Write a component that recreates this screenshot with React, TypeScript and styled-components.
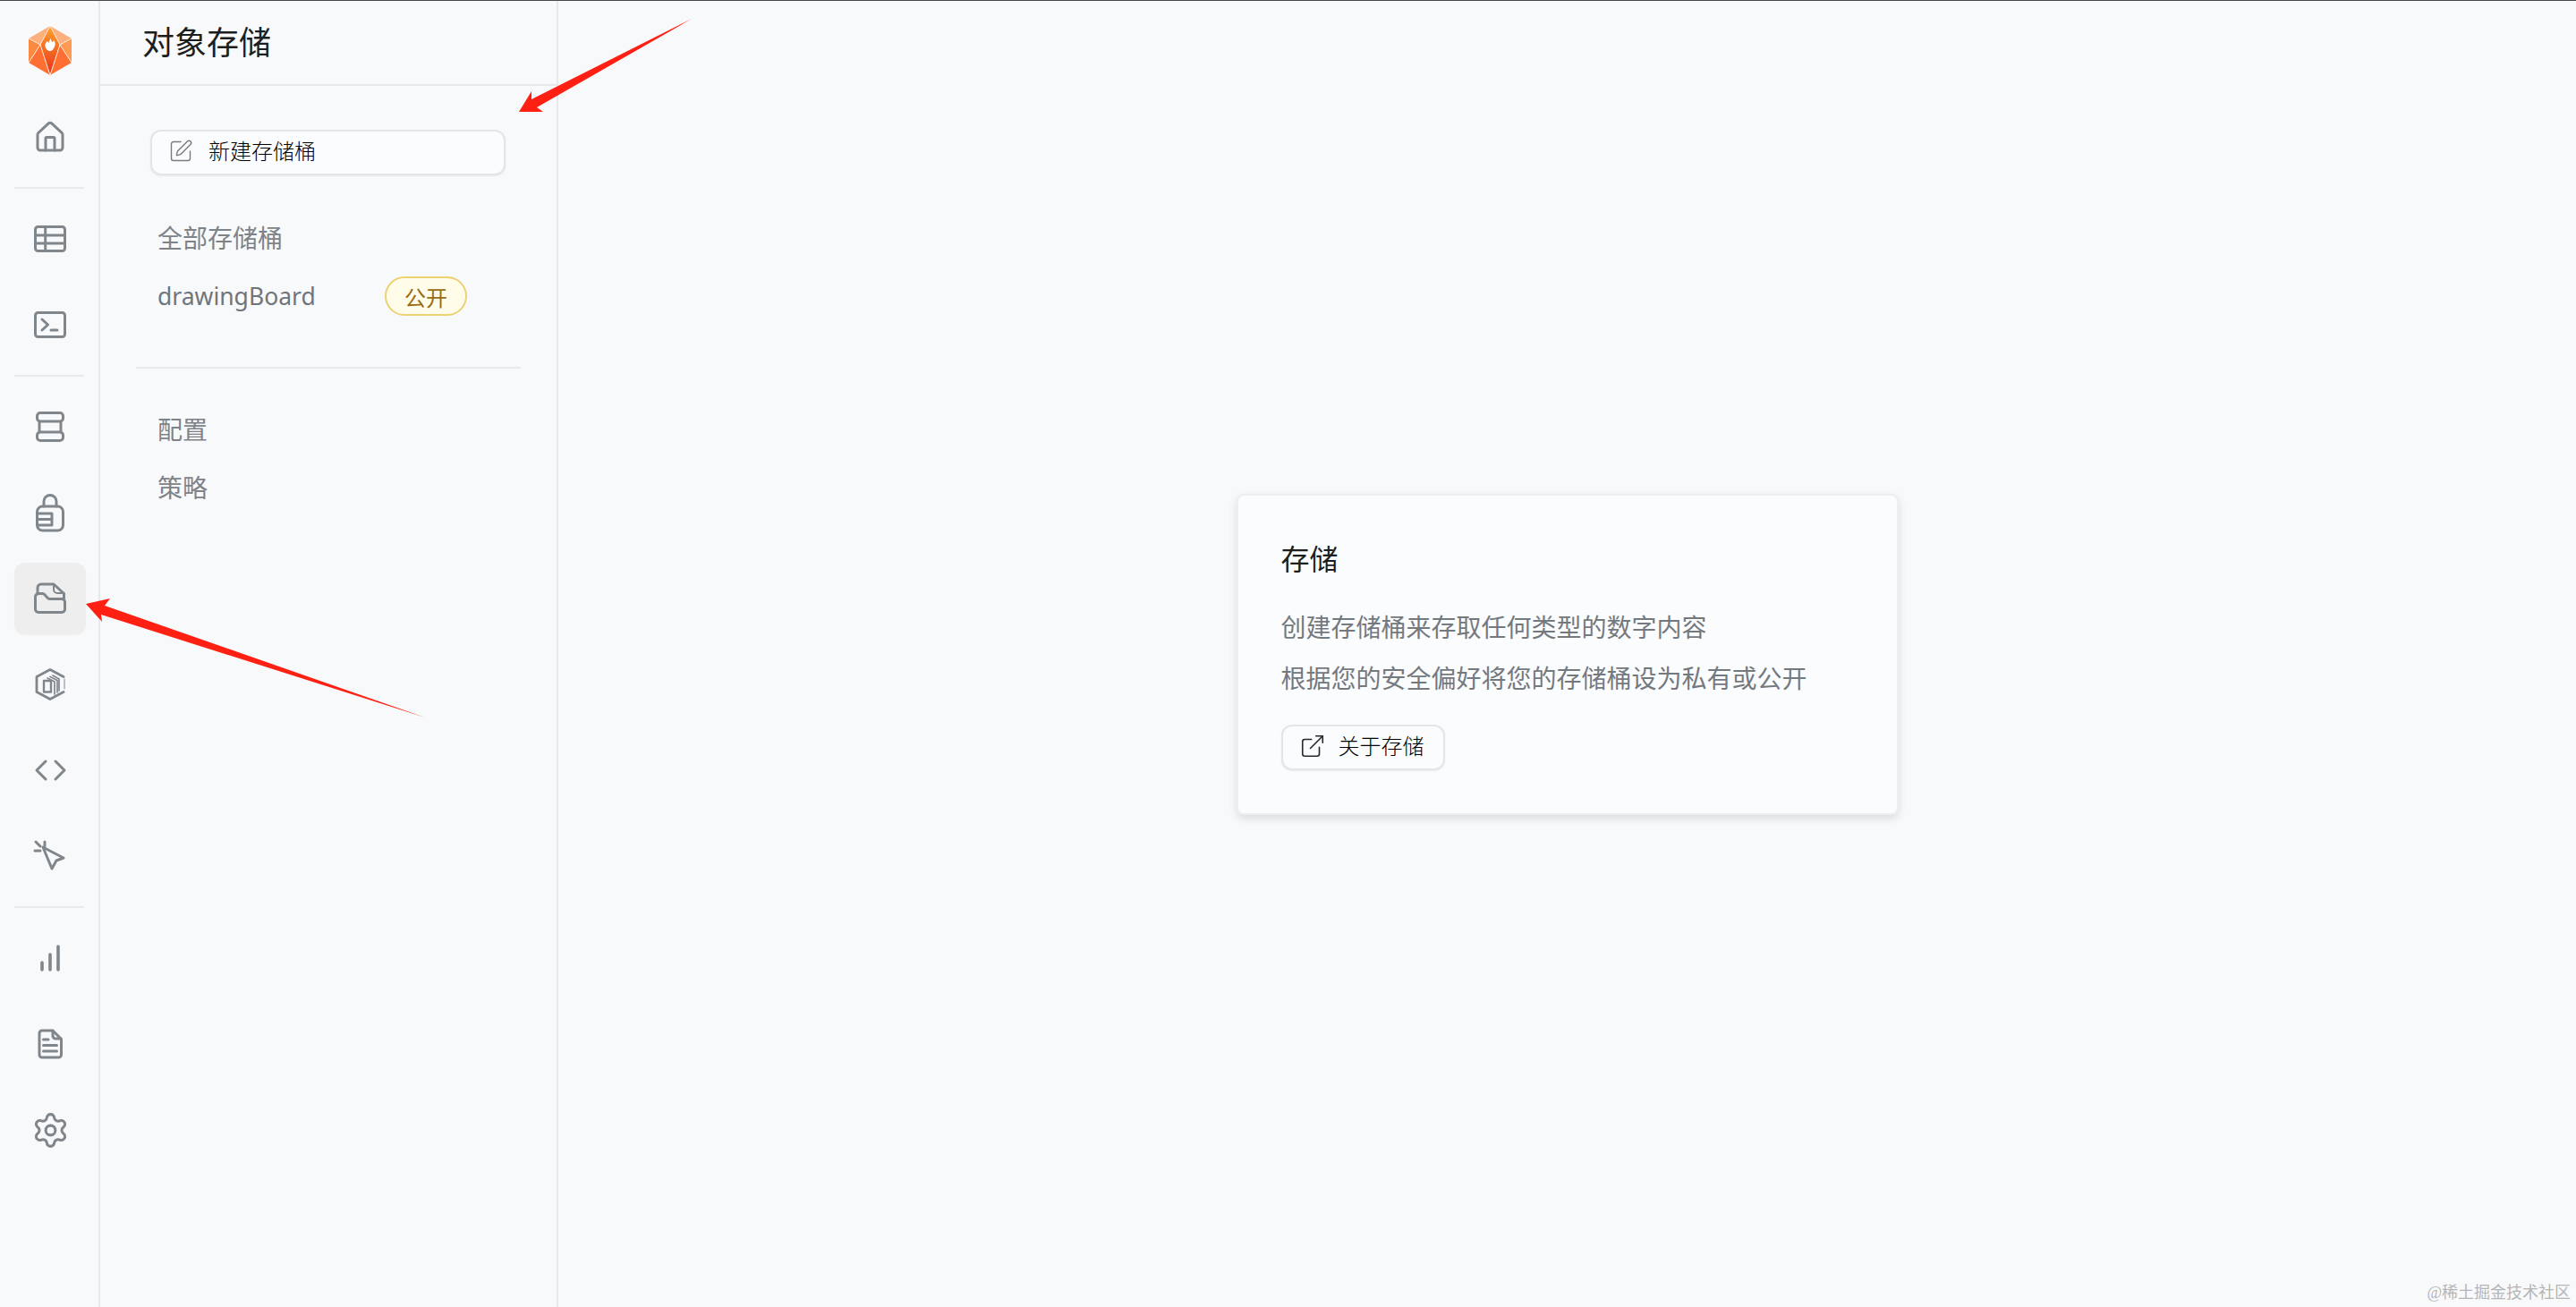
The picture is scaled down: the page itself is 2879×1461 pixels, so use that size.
import React from "react";
import styled, { createGlobalStyle } from "styled-components";
import { ExternalLink, Settings, SquarePen } from "lucide-react";

const GlobalStyle = createGlobalStyle`
  html, body {
    margin: 0;
    padding: 0;
    background: #f8f9fb;
    overflow: hidden;
  }

  * {
    box-sizing: border-box;
  }
`;

const Page = styled.div`
  position: relative;
  display: flex;
  width: 100%;
  height: 100vh;
  border-top: 1px solid #45484c;
  background: #f8f9fb;
  font-family: "Noto Sans", "Noto Sans CJK SC", sans-serif;
  font-weight: 400;
  overflow: hidden;
`;

const Rail = styled.nav`
  flex: 0 0 112px;
  display: flex;
  flex-direction: column;
  align-items: flex-start;
  gap: 16px;
  padding: 28px 0 0 16px;
  border-right: 2px solid #e6e8eb;
`;

const LogoWrap = styled.div`
  display: flex;
  justify-content: center;
  width: 80px;
  height: 68px;
`;

const RailItem = styled.a<{ $active?: boolean }>`
  display: flex;
  align-items: center;
  justify-content: center;
  width: 80px;
  height: 80px;
  border-radius: 12px;
  background: ${(p) => (p.$active ? "#eeeeee" : "transparent")};
  color: #80878c;
  box-shadow: ${(p) => (p.$active ? "0 1px 2px rgba(0, 0, 0, 0.04)" : "none")};

  svg {
    overflow: visible;
  }
`;

const RailDivider = styled.div`
  width: 78px;
  height: 2px;
  background: #e8e9eb;
`;

const Panel = styled.aside`
  flex: 0 0 512px;
  display: flex;
  flex-direction: column;
  border-right: 2px solid #e6e8eb;
`;

const PanelHeader = styled.header`
  display: flex;
  align-items: center;
  height: 95px;
  padding: 0 0 0 47px;
  border-bottom: 2px solid #e6e8eb;
`;

const PanelTitle = styled.h1`
  margin: 0;
  font-size: 36px;
  font-weight: 400;
  line-height: 1;
  color: #1c1e20;
`;

const PanelBody = styled.div`
  padding: 49px 40px 0;
`;

const GhostButton = styled.button<{ $wide?: boolean }>`
  display: flex;
  align-items: center;
  width: ${(p) => (p.$wide ? "397px" : "183px")};
  height: 51px;
  margin: ${(p) => (p.$wide ? "0 0 0 16px" : "0")};
  padding: 0 0 3px 18px;
  gap: ${(p) => (p.$wide ? "17px" : "14px")};
  border: 2px solid #e3e5e8;
  border-radius: 12px;
  background: #fbfcfe;
  box-shadow: 0 1px 2px rgba(0, 0, 0, 0.07);
  font-family: inherit;
  font-size: 24px;
  font-weight: 300;
  line-height: 1;
  color: #000000;
`;

const Group = styled.div`
  margin-top: 36px;
`;

const NavRow = styled.div`
  display: flex;
  align-items: center;
  justify-content: space-between;
  width: 370px;
  height: 66px;
  padding-left: 24px;
  font-size: 28px;
  color: #7e8388;
`;

const SettingRow = styled(NavRow)`
  height: 65px;
`;

const BucketName = styled.span`
  font-size: 26.5px;
  color: #6f757b;
`;

const Badge = styled.span`
  display: flex;
  align-items: center;
  justify-content: center;
  width: 92px;
  height: 44px;
  border: 2px solid #ecd272;
  border-radius: 22px;
  background: #fffcea;
  font-size: 24px;
  color: #9a6c10;
`;

const PanelDivider = styled.div`
  height: 2px;
  margin: 46px 0 34px;
  background: #e8e9eb;
`;

const Main = styled.main`
  flex: 1;
  display: flex;
  align-items: center;
  justify-content: center;
`;

const Card = styled.section`
  width: 740px;
  height: 359px;
  padding: 49px 48px;
  border: 2px solid #eceef0;
  border-radius: 8px;
  background: #fbfcfe;
  box-shadow: 0 4px 10px rgba(0, 0, 0, 0.12);
`;

const CardTitle = styled.h2`
  margin: 0 0 26px;
  font-size: 32px;
  font-weight: 400;
  line-height: 44px;
  color: #1c1e20;
`;

const CardText = styled.p`
  margin: 0;
  font-size: 28px;
  line-height: 57px;
  color: #74797e;
`;

const CardActions = styled.div`
  margin-top: 23px;
`;

const ArrowLayer = styled.svg`
  position: absolute;
  top: 0;
  left: 0;
  width: 800px;
  height: 820px;
  pointer-events: none;
`;

const Watermark = styled.div`
  position: absolute;
  right: 6px;
  bottom: 5px;
  font-family: "Liberation Serif", "Noto Sans CJK SC", serif;
  font-size: 18px;
  line-height: 22px;
  color: #b4b5b7;
`;

const Logo = () => (
  <svg width="48" height="55" viewBox="0 0 48 55">
    <defs>
      <linearGradient id="kite" x1="0" y1="0" x2="0" y2="1">
        <stop offset="0" stopColor="#ffa32e" />
        <stop offset="1" stopColor="#e62f1a" />
      </linearGradient>
    </defs>
    <polygon points="24,0 0,14 13,21" fill="#fdb07d" />
    <polygon points="24,0 48,14 35,21" fill="#fdb07d" />
    <polygon points="0,14 13,21 0,41" fill="#f98a3f" />
    <polygon points="48,14 35,21 48,41" fill="#fe9a51" />
    <polygon points="0,41 13,21 24,55" fill="#fe6f33" />
    <polygon points="48,41 35,21 24,55" fill="#fe6f33" />
    <polygon points="24,0 35,21 24,55 13,21" fill="url(#kite)" />
    <path
      d="M0 14L13 21L24 0L35 21L48 14M13 21L24 55L35 21M0 41L13 21M48 41L35 21"
      fill="none"
      stroke="#ffe9d8"
      strokeWidth="1"
    />
    <path
      d="M25 14c0 3 1 4 2 4l1-2c2 2 2 5 1 7-1 3-3 5-5 5s-5-2-5.500-5c-.5-3 1-5 2.500-6l1 2c1-1 1-3 3-5z"
      fill="#ffffff"
    />
  </svg>
);

const Glyph = ({ children }: { children: React.ReactNode }) => (
  <svg
    width="40"
    height="40"
    viewBox="0 0 40 40"
    fill="none"
    stroke="currentColor"
    strokeWidth="3"
    strokeLinecap="round"
    strokeLinejoin="round"
  >
    {children}
  </svg>
);

const railIcons: Record<string, React.ReactNode> = {
  home: (
    <Glyph>
      <path d="M6 32V17.5a3 3 0 0 1 1-2.2L18 5.2a3 3 0 0 1 4 0l11 10.1a3 3 0 0 1 1 2.2V32a3 3 0 0 1-3 3H9a3 3 0 0 1-3-3z" />
      <path d="M15 35V21.5a1 1 0 0 1 1-1h8a1 1 0 0 1 1 1V35" />
    </Glyph>
  ),
  table: (
    <Glyph>
      <rect x="3.5" y="6.5" width="33" height="27" rx="3" />
      <path d="M3.5 16h33M3.5 25h33M14.7 6.5v27" />
    </Glyph>
  ),
  terminal: (
    <Glyph>
      <rect x="3.5" y="6.5" width="33" height="27" rx="3" />
      <path d="M11 14l6.5 6L11 26M21 26h7" />
    </Glyph>
  ),
  database: (
    <Glyph>
      <rect x="5.5" y="4.5" width="29" height="9.5" rx="3.5" />
      <rect x="5.5" y="26" width="29" height="9.5" rx="3.5" />
      <path d="M8 14v12M32 14v12" />
    </Glyph>
  ),
  lock: (
    <Glyph>
      <rect x="5.5" y="13" width="29" height="27" rx="6" />
      <path d="M13 13V7.5a7 7 0 0 1 14 0V13" />
      <path d="M7 21h15v13H7M7 27.5h15" />
    </Glyph>
  ),
  folder: (
    <Glyph>
      <path d="M6 15V8a4 4 0 0 1 4-4h14l11.500 10.500V21" />
      <path d="M24 4v6a4 4 0 0 0 4 4h7.500" strokeWidth="2" />
      <path d="M3.500 32V18a3.500 3.500 0 0 1 3.500-3.500h4.500a3 3 0 0 1 2.200 1l3.600 4a3 3 0 0 0 2.200 1H33a3.500 3.500 0 0 1 3.500 3.500V32a3.500 3.500 0 0 1-3.500 3.500H7A3.500 3.500 0 0 1 3.500 32z" />
    </Glyph>
  ),
  cube: (
    <Glyph>
      <path d="M35 11.500L20 3.500 5 11.500v17l15 8 15-8" strokeWidth="2.800" />
      <path d="M36 14v11" strokeWidth="1" />
      <rect x="13" y="16" width="8" height="12.500" strokeWidth="2.400" />
      <path d="M17 13l8 4v14M20 11.500l8 4V29M23 10l7 4v13" strokeWidth="1.700" />
    </Glyph>
  ),
  code: (
    <Glyph>
      <path d="M15 10L5 20l10 10M26 10l10 10-10 10" />
    </Glyph>
  ),
  cursor: (
    <Glyph>
      <path d="M12 10l23 12-8 3-5 9z" />
      <path d="M14 4v5M4 4l5 5M3 14h6" />
    </Glyph>
  ),
  chart: (
    <Glyph>
      <path d="M11 25v8M20 16v17M29 7v26" strokeWidth="3.600" />
    </Glyph>
  ),
  doc: (
    <Glyph>
      <path d="M11 5h12l9.500 9.500V32a3 3 0 0 1-3 3H11a3 3 0 0 1-3-3V8a3 3 0 0 1 3-3z" />
      <path d="M23 5v6a3 3 0 0 0 3 3h6M12.500 15H18M12.500 21.500h15M12.500 28h15" />
    </Glyph>
  ),
};

const railGroups = [
  ["home"],
  ["table", "terminal"],
  ["database", "lock", "folder", "cube", "code", "cursor"],
  ["chart", "doc", "settings"],
];

const App = () => {
  return (
    <Page>
      <GlobalStyle />
      <Rail>
        <LogoWrap>
          <Logo />
        </LogoWrap>
        {railGroups.map((group, i) => (
          <React.Fragment key={group[0]}>
            {i > 0 && <RailDivider />}
            {group.map((name) => (
              <RailItem key={name} $active={name === "folder"}>
                {name === "settings" ? (
                  <Settings size={43} strokeWidth={1.7} />
                ) : (
                  railIcons[name]
                )}
              </RailItem>
            ))}
          </React.Fragment>
        ))}
      </Rail>

      <Panel>
        <PanelHeader>
          <PanelTitle>对象存储</PanelTitle>
        </PanelHeader>
        <PanelBody>
          <GhostButton $wide>
            <SquarePen size={28} strokeWidth={1.2} color="#777c80" />
            新建存储桶
          </GhostButton>
          <Group>
            <NavRow>全部存储桶</NavRow>
            <NavRow>
              <BucketName>drawingBoard</BucketName>
              <Badge>公开</Badge>
            </NavRow>
          </Group>
          <PanelDivider />
          <SettingRow>配置</SettingRow>
          <SettingRow>策略</SettingRow>
        </PanelBody>
      </Panel>

      <Main>
        <Card>
          <CardTitle>存储</CardTitle>
          <CardText>创建存储桶来存取任何类型的数字内容</CardText>
          <CardText>根据您的安全偏好将您的存储桶设为私有或公开</CardText>
          <CardActions>
            <GhostButton>
              <ExternalLink size={30} strokeWidth={1.3} color="#26282b" />
              关于存储
            </GhostButton>
          </CardActions>
        </Card>
      </Main>

      <ArrowLayer viewBox="0 0 800 820">
        <polygon
          points="580,124 594,101 594,110 773,20 600,119 607,124"
          fill="#fe2013"
        />
        <polygon
          points="96,674 123,668 117,676 475,801 113,686 114,694"
          fill="#fe2013"
        />
      </ArrowLayer>
      <Watermark>@稀土掘金技术社区</Watermark>
    </Page>
  );
};

export default App;
